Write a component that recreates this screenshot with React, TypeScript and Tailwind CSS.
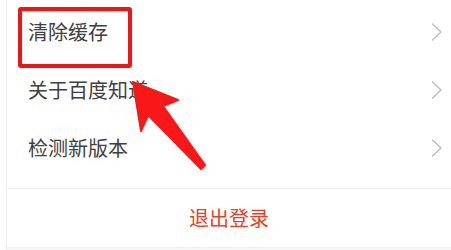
const items = ["清除缓存", "关于百度知道", "检测新版本"]

function Chevron() {
  return (
    <svg width="12" height="18" viewBox="0 0 12 18" fill="none">
      <path d="M1.5 1 L10 9 L1.5 17" stroke="#bdbdbd" strokeWidth="1.4" strokeLinecap="round" strokeLinejoin="round" />
    </svg>
  )
}

export default function App() {
  return (
    <div
      className="relative w-[451px] h-[250px] overflow-hidden bg-white pl-[6px]"
      style={{ fontFamily: '"Noto Sans CJK SC", "Noto Sans", sans-serif' }}
    >
      <div className="h-full border-l border-[#efefef] flex flex-col">
        {/* settings list */}
        <div className="pt-[3px]">
          {items.map((label) => (
            <div key={label} className="h-[58px] flex items-center justify-between pl-[21px] pr-[8px]">
              <span className="text-[20px] leading-none text-[#404040]">{label}</span>
              <Chevron />
            </div>
          ))}
        </div>

        {/* logout */}
        <div className="mt-[11px] h-[60px] border-t border-b border-[#f0f0f0] flex items-center justify-center">
          <span className="text-[20px] leading-none text-[#e0442b]">退出登录</span>
        </div>
        <div className="flex-1 bg-[#f7f7f7]" />
      </div>

      {/* annotation: highlight box */}
      <div className="absolute left-[18px] top-[7px] w-[114px] h-[61px] border-[4px] border-[#f01414] rounded-[3px]" />

      {/* annotation: arrow */}
      <svg className="absolute left-0 top-0" width="451" height="250" viewBox="0 0 451 250">
        <polygon
          points="133,82 178,100 163,106 205,165 201,169 148,115 141,131"
          fill="#f81818"
          strokeLinejoin="round"
          stroke="#f81818"
          strokeWidth="2"
        />
      </svg>
    </div>
  )
}
